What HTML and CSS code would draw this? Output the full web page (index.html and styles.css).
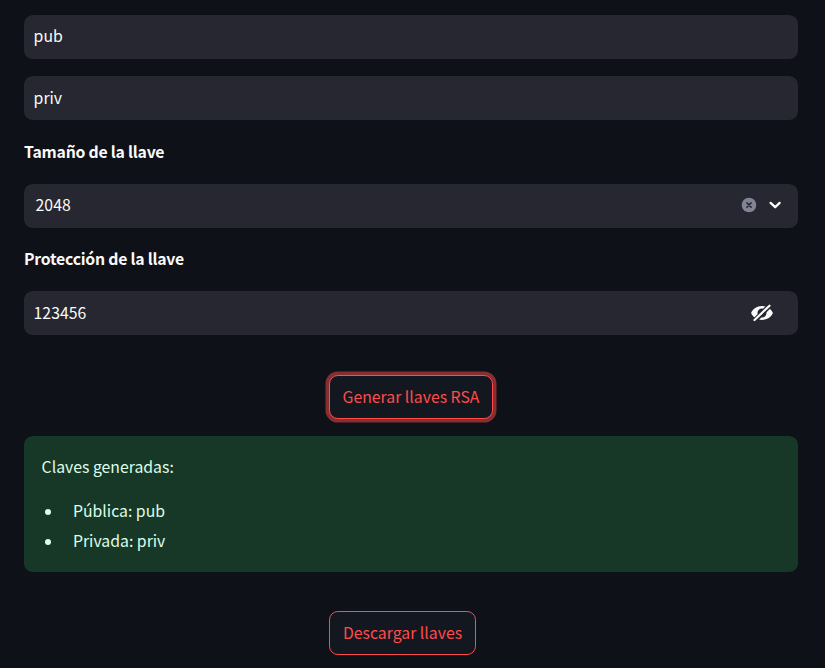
FILE: index.html
```html
<!DOCTYPE html>
<html lang="es">
<head>
<meta charset="utf-8">
<title>Llaves RSA</title>
<link rel="stylesheet" href="styles.css">
</head>
<body>
<main class="form">
  <div class="field field-first"><span class="value">pub</span></div>
  <div class="field field-next"><span class="value">priv</span></div>
  <div class="label">Tamaño de la llave</div>
  <div class="field select">
    <span class="value">2048</span>
    <svg class="clear" viewBox="0 0 16 16" width="16" height="16"><circle cx="8" cy="8" r="7.3" fill="#808495"/><path d="M5.9 5.9l4.2 4.2M10.100 5.900l-4.200 4.200" stroke="#262730" stroke-width="1.500" stroke-linecap="round"/></svg>
    <svg class="chevron" viewBox="0 0 14 10" width="14" height="10"><path d="M2.600 2.900L7.200 7.200l4.400-4.300" fill="none" stroke="#fafafa" stroke-width="2.300" stroke-linecap="round" stroke-linejoin="round"/></svg>
  </div>
  <div class="label">Protección de la llave</div>
  <div class="field">
    <span class="value">123456</span>
    <svg class="eye" viewBox="0 0 24 18" width="24" height="18"><path fill="#fafafa" fill-rule="evenodd" d="M12 2.1C6.800 2.100 2.800 5.200 1.100 9c1.700 3.900 5.700 6.900 10.900 6.900S21.200 12.900 22.900 9C21.200 5.200 17.200 2.100 12 2.100zM12 4.500a4.500 4.500 0 1 1 0 9 4.500 4.500 0 0 1 0-9z"/><path d="M5.800 15.500L19.600 1.700" stroke="#262730" stroke-width="5"/><path d="M4.500 16L19.500 1.700" stroke="#fafafa" stroke-width="2.200" stroke-linecap="round"/></svg>
  </div>
  <button class="button generate">Generar llaves RSA</button>
  <section class="alert">
    <p>Claves generadas:</p>
    <ul>
      <li>Pública: pub</li>
      <li>Privada: priv</li>
    </ul>
  </section>
  <button class="button download">Descargar llaves</button>
</main>
</body>
</html>
```
FILE: styles.css
```css
* { box-sizing: border-box; }
body {
  margin: 0;
  height: 668px;
  overflow: hidden;
  background: #0e1117;
  color: #fafafa;
  font: 15.8px/28px "Noto Sans CJK SC", "Open Sans", sans-serif;
}
.form {
  display: flex;
  flex-direction: column;
  width: 774px;
  margin-left: 24px;
  padding-top: 15px;
}
.field {
  display: flex;
  align-items: center;
  height: 44px;
  padding: 0 24px 0 9.6px;
  border-radius: 8.8px;
  background: #262730;
}
.field-first { padding-bottom: 2px; }
.field-next { margin-top: 17px; }
.value { flex: 1; }
.select { padding: 0 16px 2px 11.6px; }
.clear { margin-right: 11px; }
.label {
  height: 28px;
  margin: 18px 0;
  font-weight: 700;
  letter-spacing: -0.23px;
}
.select + .label { margin: 17px 0 18px; }
.button {
  align-self: flex-start;
  height: 44px;
  margin-left: 305px;
  padding: 0;
  border: 1px solid #ff4b4b;
  border-radius: 8.8px;
  background: #131720;
  color: #ff4b4b;
  font: inherit;
  white-space: nowrap;
}
.generate {
  width: 164px;
  margin-top: 40px;
  box-shadow: 0 0 0 3.5px rgba(255, 75, 75, 0.5);
}
.download { width: 147px; margin-top: 39px; }
.alert {
  height: 136px;
  margin-top: 17px;
  padding: 17px 17.6px;
  border-radius: 8.8px;
  background: #183827;
  color: #dffde9;
}
.alert p { margin: 0 0 15px; }
.alert ul { margin: 0; padding: 0; list-style: none; }
.alert li {
  display: flex;
  align-items: center;
  height: 30px;
}
.alert li::before {
  content: "";
  width: 6px;
  height: 6px;
  margin: 2px 22px 0 3.4px;
  border-radius: 50%;
  background: #dffde9;
}
```
